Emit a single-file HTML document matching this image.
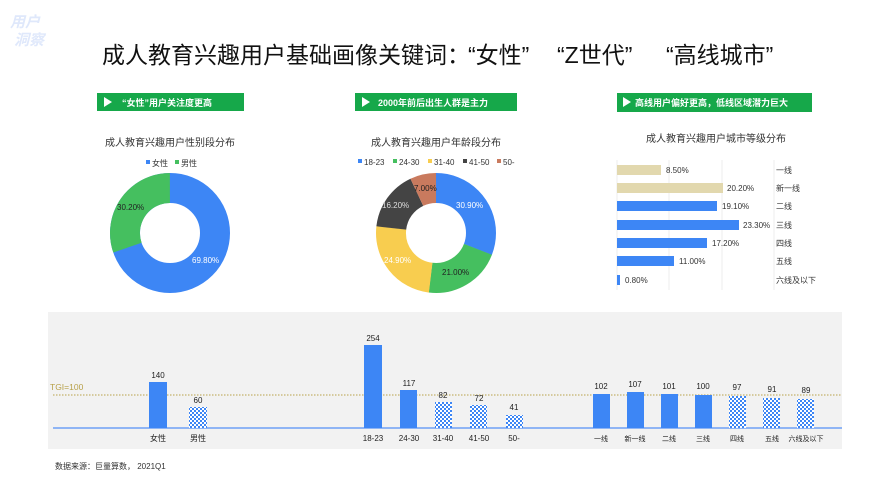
<!DOCTYPE html><html><head><meta charset="utf-8"><style>
body{margin:0;width:888px;height:500px;background:#fff;font-family:"Liberation Sans","Noto Sans CJK SC",sans-serif;overflow:hidden;position:relative}
.a{position:absolute;white-space:nowrap}
.t{position:absolute;top:36px;font-size:23px;color:#111;white-space:nowrap}
</style></head><body>
<div class="a" style="left:10px;top:14px;font-size:15px;color:#dfe8fb;font-weight:bold;font-style:italic;line-height:18px">用户<br>&nbsp;洞察</div>
<div class="t" style="left:102px">成人教育兴趣用户基础画像关键词：</div>
<div class="t" style="left:468px">“女性”</div>
<div class="t" style="left:557px">“Z世代”</div>
<div class="t" style="left:666px">“高线城市”</div>
<svg class="a" style="left:0;top:0" width="888" height="500" font-family="Liberation Sans,Noto Sans CJK SC,sans-serif">
<defs><pattern id="ck" width="4" height="4" patternUnits="userSpaceOnUse"><rect width="4" height="4" fill="#fff"/><rect width="2" height="2" fill="#3d86f5"/><rect x="2" y="2" width="2" height="2" fill="#3d86f5"/></pattern></defs>
<rect x="97" y="93" width="147" height="18" fill="#16a84a"/><path d="M104 97 l8 5 -8 5z" fill="#fff"/>
<text x="122" y="106" font-size="9" fill="#fff" font-weight="bold">“女性”用户关注度更高</text>
<rect x="355" y="93" width="162" height="18" fill="#16a84a"/><path d="M362 97 l8 5 -8 5z" fill="#fff"/>
<text x="378" y="106" font-size="9" fill="#fff" font-weight="bold">2000年前后出生人群是主力</text>
<rect x="617" y="93" width="195" height="19" fill="#16a84a"/><path d="M623 97 l8 5 -8 5z" fill="#fff"/>
<text x="635" y="106" font-size="9" fill="#fff" font-weight="bold">高线用户偏好更高，低线区域潜力巨大</text>
<g font-size="10" fill="#333">
<text x="105" y="146">成人教育兴趣用户性别段分布</text>
<text x="371" y="146">成人教育兴趣用户年龄段分布</text>
<text x="646" y="142">成人教育兴趣用户城市等级分布</text></g>
<g font-size="8" fill="#333"><rect x="146" y="160" width="4" height="4" fill="#3d86f5"/><text x="152" y="166">女性</text>
<rect x="175" y="160" width="4" height="4" fill="#45bf5f"/><text x="181" y="166">男性</text>
<rect x="358" y="159" width="4" height="4" fill="#3d86f5"/><text x="364" y="165">18-23</text>
<rect x="393" y="159" width="4" height="4" fill="#45bf5f"/><text x="399" y="165">24-30</text>
<rect x="428" y="159" width="4" height="4" fill="#f8cd4f"/><text x="434" y="165">31-40</text>
<rect x="463" y="159" width="4" height="4" fill="#444"/><text x="469" y="165">41-50</text>
<rect x="497" y="159" width="4" height="4" fill="#c97a5e"/><text x="503" y="165">50-</text></g>
<g transform="translate(170,233)">
<circle r="45" fill="none" stroke="#3d86f5" stroke-width="30"/>
<circle r="45" fill="none" stroke="#45bf5f" stroke-width="30" stroke-dasharray="85.4 300" transform="rotate(-199)"/>
<text x="22" y="30" font-size="8" fill="#fff">69.80%</text><text x="-53" y="-23" font-size="8" fill="#222">30.20%</text></g>
<g transform="translate(436,233)" fill="none" stroke-width="30">
<circle r="45" stroke="#3d86f5" stroke-dasharray="87.4 300" transform="rotate(-90)"/>
<circle r="45" stroke="#45bf5f" stroke-dasharray="59.4 300" transform="rotate(21.2)"/>
<circle r="45" stroke="#f8cd4f" stroke-dasharray="70.4 300" transform="rotate(96.8)"/>
<circle r="45" stroke="#444" stroke-dasharray="45.8 300" transform="rotate(186.4)"/>
<circle r="45" stroke="#c97a5e" stroke-dasharray="19.8 300" transform="rotate(244.8)"/>
<g font-size="8" stroke="none"><text x="20" y="-25" fill="#fff">30.90%</text><text x="6" y="42" fill="#222">21.00%</text><text x="-52" y="30" fill="#fff">24.90%</text><text x="-54" y="-25" fill="#ddd">16.20%</text><text x="-22" y="-42" fill="#222">7.00%</text></g></g>
<g stroke="#ececec"><line x1="617" y1="160" x2="617" y2="290"/><line x1="669" y1="160" x2="669" y2="290"/><line x1="722" y1="160" x2="722" y2="290"/><line x1="774" y1="160" x2="774" y2="290"/></g>
<g font-size="8" fill="#333">
<rect x="617" y="165" width="44" height="10" fill="#e2d8ae"/><text x="666" y="173">8.50%</text><text x="776" y="173">一线</text>
<rect x="617" y="183" width="106" height="10" fill="#e2d8ae"/><text x="727" y="191">20.20%</text><text x="776" y="191">新一线</text>
<rect x="617" y="201" width="100" height="10" fill="#3d86f5"/><text x="722" y="209">19.10%</text><text x="776" y="209">二线</text>
<rect x="617" y="220" width="122" height="10" fill="#3d86f5"/><text x="743" y="228">23.30%</text><text x="776" y="228">三线</text>
<rect x="617" y="238" width="90" height="10" fill="#3d86f5"/><text x="712" y="246">17.20%</text><text x="776" y="246">四线</text>
<rect x="617" y="256" width="57" height="10" fill="#3d86f5"/><text x="679" y="264">11.00%</text><text x="776" y="264">五线</text>
<rect x="617" y="275" width="3" height="10" fill="#3d86f5"/><text x="625" y="283">0.80%</text><text x="776" y="283">六线及以下</text></g>
<rect x="48" y="312" width="794" height="137" fill="#f2f2f2"/>
<line x1="53" y1="395" x2="842" y2="395" stroke="#b8a14a" stroke-width="1" stroke-dasharray="1.5 1.5"/>
<text x="50" y="390" font-size="8.5" fill="#b8a14a">TGI=100</text>
<line x1="53" y1="428" x2="842" y2="428" stroke="#8fb5f5" stroke-width="2"/>
<g font-size="8" fill="#222" text-anchor="middle">
<rect x="149" y="382" width="18" height="46" fill="#3d86f5"/><text x="158" y="378">140</text>
<rect x="189" y="407" width="18" height="21" fill="url(#ck)"/><text x="198" y="403">60</text>
<rect x="364" y="345" width="18" height="83" fill="#3d86f5"/><text x="373" y="341">254</text>
<rect x="400" y="390" width="17" height="38" fill="#3d86f5"/><text x="409" y="386">117</text>
<rect x="435" y="402" width="17" height="26" fill="url(#ck)"/><text x="443" y="398">82</text>
<rect x="470" y="405" width="17" height="23" fill="url(#ck)"/><text x="479" y="401">72</text>
<rect x="506" y="415" width="17" height="13" fill="url(#ck)"/><text x="514" y="410">41</text>
<rect x="593" y="394" width="17" height="34" fill="#3d86f5"/><text x="601" y="389">102</text>
<rect x="627" y="392" width="17" height="36" fill="#3d86f5"/><text x="635" y="387">107</text>
<rect x="661" y="394" width="17" height="34" fill="#3d86f5"/><text x="669" y="389">101</text>
<rect x="695" y="395" width="17" height="33" fill="#3d86f5"/><text x="703" y="389">100</text>
<rect x="729" y="396" width="17" height="32" fill="url(#ck)"/><text x="737" y="390">97</text>
<rect x="763" y="398" width="17" height="30" fill="url(#ck)"/><text x="772" y="392">91</text>
<rect x="797" y="399" width="17" height="29" fill="url(#ck)"/><text x="806" y="393">89</text>
<text x="158" y="441">女性</text><text x="198" y="441">男性</text>
<text x="373" y="441">18-23</text><text x="409" y="441">24-30</text><text x="443" y="441">31-40</text><text x="479" y="441">41-50</text><text x="514" y="441">50-</text>
<g font-size="7"><text x="601" y="441">一线</text><text x="635" y="441">新一线</text><text x="669" y="441">二线</text><text x="703" y="441">三线</text><text x="737" y="441">四线</text><text x="772" y="441">五线</text><text x="806" y="441">六线及以下</text></g></g>
<text x="55" y="469" font-size="8" fill="#333">数据来源：巨量算数， 2021Q1</text>
</svg>
</body></html>
